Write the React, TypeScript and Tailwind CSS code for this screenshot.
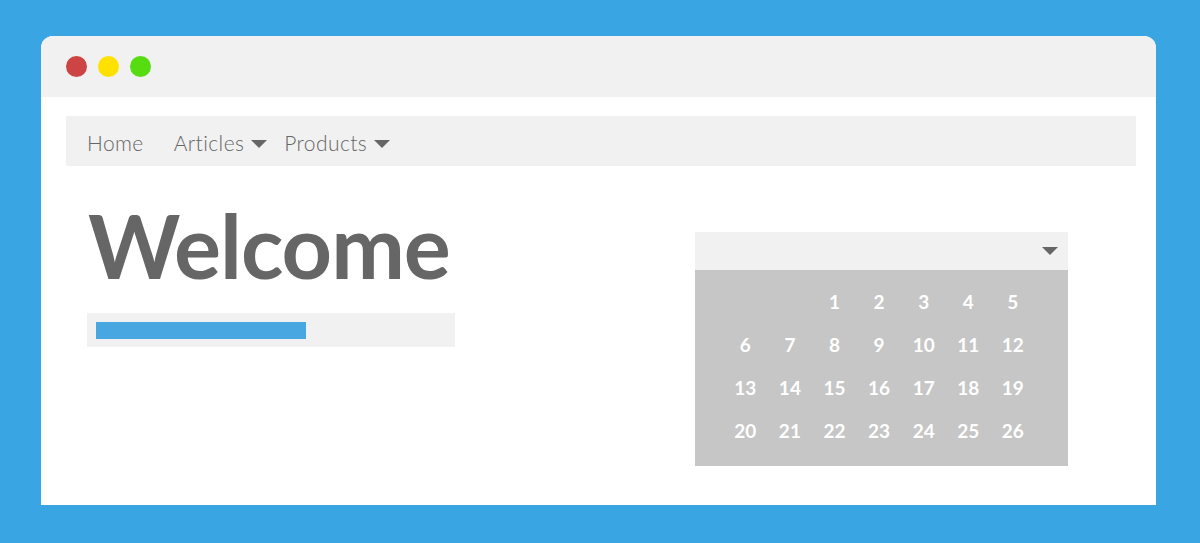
import React from 'react';

const Caret = ({ className = '' }: { className?: string }) => (
  <svg width="16" height="8" viewBox="0 0 16 8" className={className}>
    <path d="M0 0 L16 0 L8 8 Z" fill="#666666" />
  </svg>
);

const weeks: (number | null)[][] = [
  [null, null, 1, 2, 3, 4, 5],
  [6, 7, 8, 9, 10, 11, 12],
  [13, 14, 15, 16, 17, 18, 19],
  [20, 21, 22, 23, 24, 25, 26],
];

export default function App() {
  return (
    <div className="w-[1200px] h-[543px] bg-[#39a5e3] pt-[36px] pl-[41px] pr-[44px] pb-[38px] font-['Lato',sans-serif]">
      <div className="h-full bg-white rounded-t-[12px] overflow-hidden flex flex-col">
        {/* Title bar */}
        <div className="h-[61px] bg-[#f1f1f1] flex items-center gap-[11px] pl-[25px] shrink-0">
          <span className="w-[21px] h-[21px] rounded-full bg-[#cc4444]" />
          <span className="w-[21px] h-[21px] rounded-full bg-[#ffe100]" />
          <span className="w-[21px] h-[21px] rounded-full bg-[#55dd11]" />
        </div>

        <div className="pt-[19px] pl-[25px] pr-[20px]">
          {/* Nav */}
          <nav className="h-[50px] bg-[#f1f1f1] flex items-center pl-[21px] pt-[3px] text-[21px] font-light tracking-[0.4px] text-[#666666]">
            <span>Home</span>
            <span className="ml-[30px] flex items-center">
              Articles <Caret className="ml-[7px] mt-[2px]" />
            </span>
            <span className="ml-[17px] flex items-center">
              Products <Caret className="ml-[7px] mt-[2px]" />
            </span>
          </nav>

          <div className="flex pl-[21px]">
            {/* Left column */}
            <div className="w-[368px] pt-[35px]">
              <h1 className="text-[88px] leading-none font-bold text-[#666666] pl-[1px] tracking-[-1px]">Welcome</h1>
              <div className="mt-[24px] h-[34px] bg-[#f1f1f1] flex items-center pl-[9px]">
                <div className="w-[210px] h-[17px] bg-[#48a6e0]" />
              </div>
            </div>

            {/* Calendar */}
            <div className="ml-[240px] mt-[66px] w-[373px]">
              <div className="h-[38px] bg-[#f1f1f1] flex items-center justify-end pr-[10px]">
                <Caret />
              </div>
              <div className="h-[196px] bg-[#c6c6c6] pl-[28px] pt-[11px]">
                {weeks.map((week, i) => (
                  <div key={i} className="grid grid-cols-[repeat(7,44.6px)] h-[43px] items-center">
                    {week.map((d, j) => (
                      <span key={j} className="text-center text-white text-[19px] font-bold">
                        {d ?? ''}
                      </span>
                    ))}
                  </div>
                ))}
              </div>
            </div>
          </div>
        </div>
      </div>
    </div>
  );
}
